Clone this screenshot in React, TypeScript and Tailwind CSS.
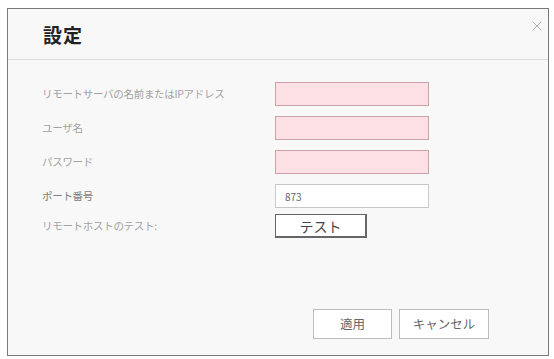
import { X } from 'lucide-react';

const font = { fontFamily: '"Noto Sans CJK JP", "Noto Sans", sans-serif' };

const rows = [
  { label: 'リモートサーバの名前またはIPアドレス', kind: 'error' },
  { label: 'ユーザ名', kind: 'error' },
  { label: 'パスワード', kind: 'error' },
  { label: 'ポート番号', kind: 'port' },
];

const App = () => {
  return (
    <div className="w-[554px] h-[359px] bg-white pt-[8px] pl-[7px]" style={font}>
      <div className="relative w-[542px] h-[348px] border border-[#7a7a7a] bg-[#f8f8f8] flex flex-col">
        {/* Header */}
        <div className="h-[51px] border-b border-[#dcdcdc] flex items-center pl-[35px]">
          <h1 className="text-[19px] font-bold text-[#222] leading-none tracking-[1px]">設定</h1>
        </div>
        <button className="absolute top-[9px] right-[3px] text-[#b8b8b8]">
          <X size={16} strokeWidth={1.5} />
        </button>

        {/* Form */}
        <div className="flex flex-col gap-[10px] pt-[22px] pl-[34px]">
          {rows.map((row) => (
            <div key={row.label} className="flex items-center">
              <span
                className={
                  row.kind === 'port'
                    ? 'w-[233px] text-[10.5px] tracking-[-0.3px] text-[#808080]'
                    : 'w-[233px] text-[10.5px] tracking-[-0.3px] text-[#a2a2a2]'
                }
              >
                {row.label}
              </span>
              {row.kind === 'port' ? (
                <div className="w-[154px] h-[24px] border border-[#c8c8c8] bg-white flex items-center pl-[9px] text-[10px] text-[#666]">
                  873
                </div>
              ) : (
                <div className="w-[154px] h-[24px] border border-[#c9a2aa] bg-[#fde1e5]" />
              )}
            </div>
          ))}
          <div className="flex items-center -mt-[4px]">
            <span className="w-[233px] text-[10.5px] tracking-[-0.3px] text-[#a2a2a2]">リモートホストのテスト:</span>
            <button className="w-[92px] h-[24px] border border-[#666] border-r-2 border-b-2 bg-white text-[14px] text-[#444] leading-none">
              テスト
            </button>
          </div>
        </div>

        {/* Footer */}
        <div className="mt-auto flex justify-end gap-[7px] pr-[59px] pb-[16px]">
          <button className="w-[79px] h-[30px] border border-[#bdbdbd] bg-white text-[12.5px] text-[#666]">
            適用
          </button>
          <button className="w-[90px] h-[30px] border border-[#bdbdbd] bg-white text-[12.5px] text-[#666]">
            キャンセル
          </button>
        </div>
      </div>
    </div>
  );
};

export default App;
